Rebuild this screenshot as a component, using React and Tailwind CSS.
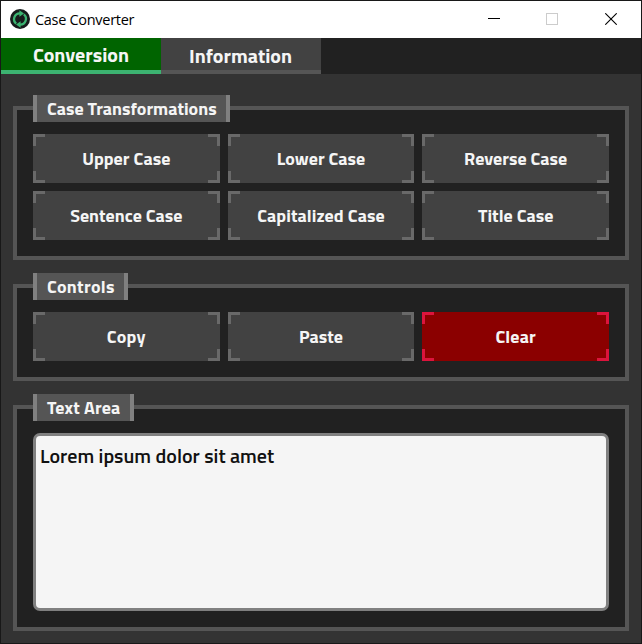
import React from "react";

const corner = "absolute size-3";

function ActionButton({ children, danger = false, tracking = "" }) {
  const edge = danger ? "border-[#dc143c]" : "border-[#696969]";
  return (
    <button
      className={`relative flex h-[49px] items-center justify-center text-[18px] font-bold text-[#f5f5f5] ${
        danger ? "bg-[#8b0000]" : "bg-[#424242]"
      }`}
    >
      <span className={`${corner} ${edge} top-0 left-0 border-t-3 border-l-3`} />
      <span className={`${corner} ${edge} top-0 right-0 border-t-3 border-r-3`} />
      <span className={`${corner} ${edge} bottom-0 left-0 border-b-3 border-l-3`} />
      <span className={`${corner} ${edge} right-0 bottom-0 border-r-3 border-b-3`} />
      <span className={`whitespace-nowrap ${tracking}`}>{children}</span>
    </button>
  );
}

function Group({ title, width, tracking = "", className = "", children }) {
  return (
    <section className={`border-4 border-[#555555] bg-[#212121] px-4 pb-4 ${className}`}>
      <h2
        className={`-mt-[15px] mb-3 h-[27px] shrink-0 border-x-4 border-[#808080] bg-[#555555] pl-[10px] text-[18px] leading-[28px] font-bold whitespace-nowrap text-[#f5f5f5] ${width} ${tracking}`}
      >
        {title}
      </h2>
      {children}
    </section>
  );
}

function AppIcon() {
  return (
    <svg className="size-5" viewBox="0 0 20 20" fill="none">
      <circle cx="10" cy="10" r="10" fill="#171b1b" />
      <g stroke="#3cb371" strokeWidth="2.3">
        <path d="M6.2 14.6A5.8 5.8 0 0 1 10 4.3" />
        <path d="M13.8 5.4A5.8 5.8 0 0 1 10 15.7" />
      </g>
      <path d="M9.4 1.2 14 4.4 9.4 7.8zM10.6 18.8 6 15.6l4.6-3.4z" fill="#3cb371" />
    </svg>
  );
}

export default function App() {
  return (
    <div className="flex h-[644px] w-[642px] flex-col border border-[#181818] bg-[#333333] font-['Titillium_Web','Roboto',sans-serif]">
      <header className="flex h-[37px] shrink-0 items-center bg-white pb-px pl-[9px]">
        <AppIcon />
        <h1 className="ml-[5px] pt-px font-['Segoe_UI','Open_Sans',sans-serif] text-[14.5px] tracking-[-0.3px] text-black">
          Case Converter
        </h1>
        <div className="ml-auto flex items-center gap-[46px] pr-[24px]">
          <svg className="size-3" viewBox="0 0 12 12" shapeRendering="crispEdges">
            <path d="M0 5.5h12" stroke="#000" />
          </svg>
          <svg className="mr-px size-3" viewBox="0 0 12 12" fill="none" shapeRendering="crispEdges">
            <path d="M.5.5h11v11H.5z" stroke="#ccc" />
          </svg>
          <svg className="size-3" viewBox="0 0 12 12">
            <path d="m.3.3 11.4 11.4m0-11.4L.3 11.7" stroke="#000" strokeWidth="1.1" />
          </svg>
        </div>
      </header>

      <nav className="flex h-9 shrink-0 bg-[#212121] text-[20px] font-bold text-[#f5f5f5]">
        <button className="w-40 border-b-4 border-[#3cb371] bg-[#006400] pt-px">Conversion</button>
        <button className="w-40 border-b-4 border-[#555555] bg-[#424242] pt-[3px] pr-px">Information</button>
      </nav>

      <main className="flex flex-1 flex-col gap-6 px-3 pt-8 pb-3">
        <Group title="Case Transformations" width="w-[197px]" className="h-[154px]">
          <div className="grid grid-cols-3 gap-2">
            <ActionButton tracking="tracking-[0.06px]">Upper Case</ActionButton>
            <ActionButton>Lower Case</ActionButton>
            <ActionButton>Reverse Case</ActionButton>
            <ActionButton>Sentence Case</ActionButton>
            <ActionButton tracking="tracking-[0.06px]">Capitalized Case</ActionButton>
            <ActionButton>Title Case</ActionButton>
          </div>
        </Group>

        <Group title="Controls" width="w-[95px]" tracking="tracking-[0.3px]" className="h-[97px]">
          <div className="grid grid-cols-3 gap-2">
            <ActionButton tracking="tracking-[0.3px]">Copy</ActionButton>
            <ActionButton>Paste</ActionButton>
            <ActionButton danger tracking="tracking-[0.15px]">Clear</ActionButton>
          </div>
        </Group>

        <Group title="Text Area" width="w-[101px]" tracking="tracking-[0.1px]" className="flex flex-1 flex-col">
          <textarea
            className="block w-full flex-1 resize-none rounded-[7px] border-3 border-[#808080] bg-[#f5f5f5] px-1 py-[5px] text-[20px] leading-[30px] font-semibold text-[#111111] outline-none"
            defaultValue="Lorem ipsum dolor sit amet"
          />
        </Group>
      </main>
    </div>
  );
}
